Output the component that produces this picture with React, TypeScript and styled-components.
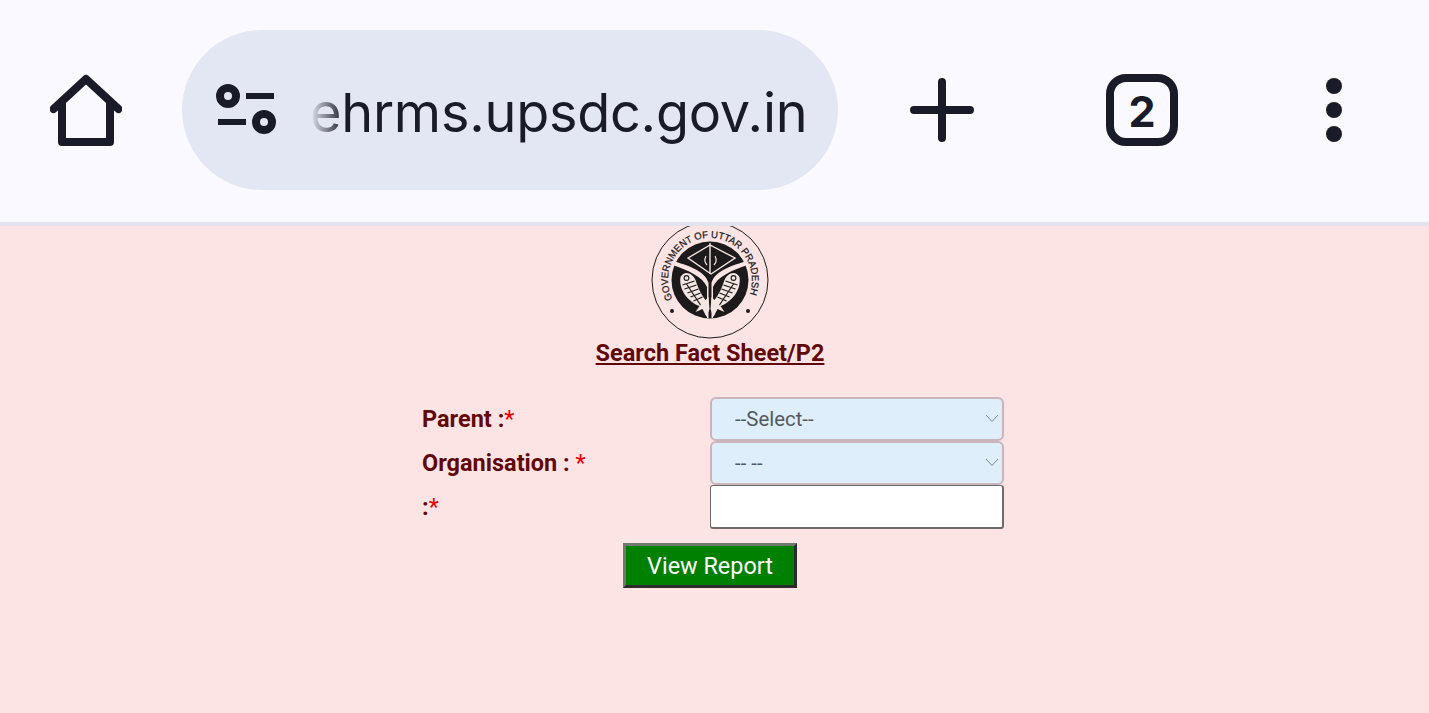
import React from 'react'
import styled, { createGlobalStyle } from 'styled-components'

const GlobalStyle = createGlobalStyle`
    html, body {
        margin: 0;
        height: 100%;
        background: #fce4e4;
        overflow: hidden;
    }
`

const Page = styled.div`
    min-height: 713px;
    font-family: Roboto, "Liberation Sans", sans-serif;
`

const BrowserBar = styled.header`
    display: grid;
    grid-template-columns: 172px 10px 656px 208px 192px 191px;
    align-items: center;
    box-sizing: border-box;
    height: 226px;
    padding: 30px 0 36px;
    background: #f9f9ff;
    border-bottom: 4px solid #e1e4ef;
`

const BarButton = styled.div`
    display: flex;
    justify-content: center;
    align-items: center;
    color: #191c28;
`

const UrlPill = styled.div`
    grid-column: 3;
    display: flex;
    align-items: center;
    height: 160px;
    border-radius: 80px;
    background: #e3e6f3;
    padding-left: 32px;
    box-sizing: border-box;
`

const UrlText = styled.div`
    width: 504px;
    margin: 6px 0 0 32px;
    white-space: nowrap;
    font-family: Inter, Roboto, sans-serif;
    font-size: 54px;
    line-height: 62px;
    letter-spacing: -0.25px;
    color: #191c28;
    -webkit-mask-image: linear-gradient(to right, transparent 0, #000 34px);
    mask-image: linear-gradient(to right, transparent 0, #000 34px);
`

const Content = styled.main`
    width: 1420px;
`

const Emblem = styled.svg`
    display: block;
    margin: 0 auto;
`

const Title = styled.h1`
    margin: 0;
    text-align: center;
    font-size: 23.5px;
    line-height: 27px;
    font-weight: 700;
    color: #620808;
    text-decoration: underline;
`

const FormGrid = styled.form`
    display: grid;
    grid-template-columns: 288px 294px;
    grid-auto-rows: 44px;
    width: 582px;
    margin: 30px 0 0 422px;
`

const FieldLabel = styled.label`
    display: flex;
    align-items: center;
    font-size: 23.5px;
    font-weight: 700;
    color: #620808;
    white-space: pre;
`

const Required = styled.span`
    color: #f00000;
    font-weight: 400;
`

const SelectWrap = styled.div`
    position: relative;
`

const Select = styled.select`
    appearance: none;
    width: 100%;
    height: 100%;
    box-sizing: border-box;
    padding: 0 0 0 23px;
    border: 2px solid #c9b5ba;
    border-radius: 6px;
    background: #deeffb;
    font-family: Roboto, sans-serif;
    font-size: 20.4px;
    color: #555a60;
`

const Chevron = styled.svg`
    position: absolute;
    top: 17px;
    right: 5px;
    pointer-events: none;
`

const TextInput = styled.input`
    box-sizing: border-box;
    width: 100%;
    height: 100%;
    border: 1px solid #6f6a6a;
    border-right-width: 2px;
    border-bottom-width: 2px;
    border-radius: 3px;
    background: #fff;
`

const ButtonRow = styled.div`
    display: flex;
    justify-content: center;
    margin-top: 14px;
`

const ViewButton = styled.button`
    box-sizing: border-box;
    width: 174px;
    height: 45px;
    padding: 1px 0 0;
    border: 3px solid;
    border-color: #6f7a6f #2c2c2c #2c2c2c #6f7a6f;
    background: #008000;
    color: #fff;
    font-family: Roboto, sans-serif;
    font-size: 23.4px;
`

const HomeIcon = () => (
    <svg width="72" height="72" viewBox="0 0 72 72" fill="none" stroke="currentColor" strokeWidth="8" strokeLinecap="round" strokeLinejoin="round">
        <path d="M3.5 35 L36 5 L68.5 35" />
        <path d="M12 28 V68 H60 V28" />
    </svg>
)

const TuneIcon = () => (
    <svg width="64" height="56" viewBox="0 0 64 56" fill="none" stroke="#191c28" style={{ flexShrink: 0 }}>
        <circle cx="14" cy="14" r="8" strokeWidth="8" />
        <circle cx="50" cy="40" r="8" strokeWidth="8" />
        <path d="M32 14 H60 M4 40 H32" strokeWidth="6" />
    </svg>
)

const PlusIcon = () => (
    <svg width="64" height="64" viewBox="0 0 64 64" stroke="currentColor" strokeWidth="8" strokeLinecap="round">
        <path d="M4 32 H60 M32 4 V60" />
    </svg>
)

const TabsIcon = () => (
    <svg width="72" height="72" viewBox="0 0 72 72" fill="none">
        <rect x="4" y="4" width="64" height="64" rx="16" stroke="#191c28" strokeWidth="8" />
        <text x="36" y="53" textAnchor="middle" fontFamily="Inter, Roboto, sans-serif" fontWeight="700" fontSize="43" fill="#191c28">2</text>
    </svg>
)

const MenuIcon = () => (
    <svg width="16" height="64" viewBox="0 0 16 64" fill="currentColor">
        <circle cx="8" cy="8" r="8" />
        <circle cx="8" cy="32" r="8" />
        <circle cx="8" cy="56" r="8" />
    </svg>
)

const ChevronIcon = () => (
    <Chevron width="14" height="9" viewBox="0 0 14 9" fill="none" stroke="#7d8790" strokeWidth="1">
        <path d="M1 1 L7 7.5 L13 1" />
    </Chevron>
)

// one of the two fish on the emblem, the other is mirrored
const Fish = () => (
    <g transform="translate(1.5 2)">
        <path d="M-31 -5 C-27 -12 -19 -9 -16 -2 C-13 7 -10 13 -6 18 L-3 15 L-2 27 L-5 35 L-9 27 L-16 30 L-12 24 C-23 20 -33 8 -31 -5 Z" fill="#f4e6e2" />
        <circle cx="-25" cy="-4" r="2.4" fill="none" stroke="#1c1a1a" strokeWidth="1.1" />
        <path d="M-29 3 L-17 -1 M-27 7 L-15 3 M-24 11 L-13 7 M-21 15 L-11 11 M-18 19 L-9 15 M-25 2 L-11 23" stroke="#1c1a1a" strokeWidth="1.2" />
    </g>
)

const UpEmblem = () => (
    <Emblem width="120" height="114" viewBox="-60 -54 120 114">
        <defs>
            <path id="emblem-ring" d="M -37.4 19 A 42 42 0 1 1 37.4 19" />
        </defs>
        <circle r="58" fill="none" stroke="#1a1a1a" strokeWidth="1" />
        <circle r="38.5" fill="#1c1a1a" />
        <text fontFamily="Liberation Sans, sans-serif" fontSize="9.8" fill="#1a1a1a" stroke="#1a1a1a" strokeWidth="0.25">
            <textPath href="#emblem-ring" startOffset="0" textLength="166" lengthAdjust="spacingAndGlyphs">GOVERNMENT OF UTTAR PRADESH</textPath>
        </text>
        <circle cx="-38" cy="31" r="2" fill="#1a1a1a" />
        <circle cx="38" cy="31" r="2" fill="#1a1a1a" />
        <path d="M-37 -19 C-24 -15 -5 -10 -1.5 3 L-1.5 38 L1.5 38 L1.5 3 C5 -10 24 -15 37 -19 L37.5 -15 C22 -10 7 -3 3 7 L3 38 L-3 38 L-3 7 C-7 -3 -22 -10 -37.5 -15 Z" fill="#fce4e4" />
        <path d="M-22 -22 L0 -35 L25 -22 L1 -6 Z M0 -37 V-6" fill="none" stroke="#f4e6e2" strokeWidth="1.4" />
        <path d="M-4 -24 C-6 -20 -5 -17 -3 -15 M5 -24 C7 -20 6 -17 4 -15" fill="none" stroke="#f4e6e2" strokeWidth="1.2" />
        <Fish />
        <g transform="scale(-1 1)">
            <Fish />
        </g>
    </Emblem>
)

export default function App() {
    return (
        <Page>
            <GlobalStyle />
            <BrowserBar>
                <BarButton><HomeIcon /></BarButton>
                <UrlPill>
                    <TuneIcon />
                    <UrlText>ehrms.upsdc.gov.in</UrlText>
                </UrlPill>
                <BarButton><PlusIcon /></BarButton>
                <BarButton><TabsIcon /></BarButton>
                <BarButton><MenuIcon /></BarButton>
            </BrowserBar>
            <Content>
                <UpEmblem />
                <Title>Search Fact Sheet/P2</Title>
                <FormGrid>
                    <FieldLabel>Parent :<Required>*</Required></FieldLabel>
                    <SelectWrap>
                        <Select defaultValue="select">
                            <option value="select">--Select--</option>
                        </Select>
                        <ChevronIcon />
                    </SelectWrap>
                    <FieldLabel>Organisation : <Required>*</Required></FieldLabel>
                    <SelectWrap>
                        <Select defaultValue="none">
                            <option value="none">-- --</option>
                        </Select>
                        <ChevronIcon />
                    </SelectWrap>
                    <FieldLabel>:<Required>*</Required></FieldLabel>
                    <TextInput type="text" />
                </FormGrid>
                <ButtonRow>
                    <ViewButton type="button">View Report</ViewButton>
                </ButtonRow>
            </Content>
        </Page>
    )
}
